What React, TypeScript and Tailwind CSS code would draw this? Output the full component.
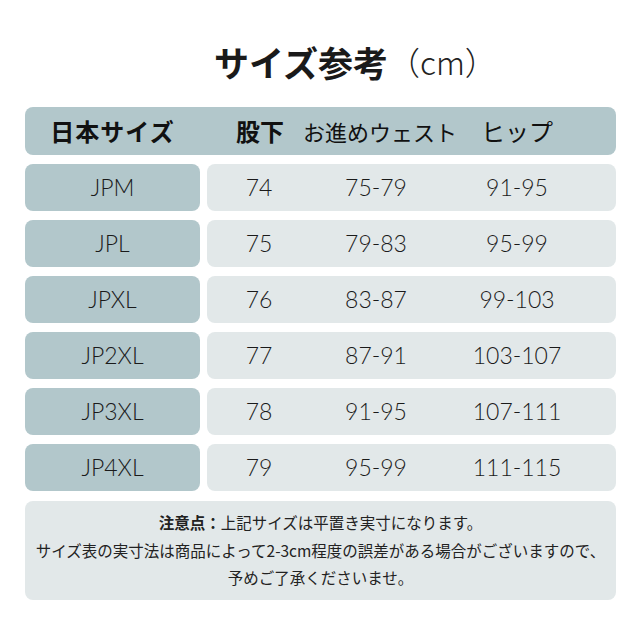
const rows = [
  { size: "JPM", inseam: "74", waist: "75-79", hip: "91-95" },
  { size: "JPL", inseam: "75", waist: "79-83", hip: "95-99" },
  { size: "JPXL", inseam: "76", waist: "83-87", hip: "99-103" },
  { size: "JP2XL", inseam: "77", waist: "87-91", hip: "103-107" },
  { size: "JP3XL", inseam: "78", waist: "91-95", hip: "107-111" },
  { size: "JP4XL", inseam: "79", waist: "95-99", hip: "111-115" },
];

const jp = { fontFamily: '"Noto Sans CJK JP", "Noto Sans", sans-serif' };
const num = { fontFamily: 'Lato, "Noto Sans CJK JP", sans-serif' };

export default function App() {
  return (
    <div className="w-[640px] h-[640px] bg-white text-[#1a1a1a]" style={jp}>
      {/* タイトル */}
      <div className="pt-[44px] pl-[214px] flex items-center leading-[35px] whitespace-nowrap">
        <span className="text-[35px] font-bold">サイズ参考</span>
        <span className="text-[32px] font-light text-[#222]">（cm）</span>
      </div>

      <div className="mt-[28px] ml-[25px] w-[591px] flex flex-col gap-[9px]">
        {/* ヘッダー */}
        <div className="h-[48px] rounded-[8px] bg-[#b2c7cb] grid grid-cols-[175px_7px_104px_130px_152px] items-center whitespace-nowrap font-bold text-[#111]">
          <div className="text-center text-[24px] tracking-[1px]">日本サイズ</div>
          <div />
          <div className="text-center text-[24px] pl-[2px]">股下</div>
          <div className="flex justify-center text-[22px] font-normal pl-[8px]">お進めウェスト</div>
          <div className="text-center text-[24px] font-normal">ヒップ</div>
        </div>

        {/* データ行 */}
        {rows.map((r) => (
          <div key={r.size} className="h-[47px] flex gap-[7px]" style={num}>
            <div className="w-[175px] rounded-[8px] bg-[#b2c7cb] flex items-center justify-center text-[23px] font-light">
              {r.size}
            </div>
            <div className="flex-1 rounded-[8px] bg-[#e2e8e9] grid grid-cols-[104px_130px_152px] items-center text-[23px] font-light">
              <div className="text-center">{r.inseam}</div>
              <div className="text-center">{r.waist}</div>
              <div className="text-center">{r.hip}</div>
            </div>
          </div>
        ))}

        {/* 注意点 */}
        <div className="mt-[1px] h-[99px] rounded-[8px] bg-[#e2e8e9] flex flex-col items-center justify-center text-[15.5px] leading-[27.5px] text-[#222]">
          <p>
            <span className="font-bold">注意点：</span>上記サイズは平置き実寸になります。
          </p>
          <p className="whitespace-nowrap">
            サイズ表の実寸法は商品によって2-3cm程度の誤差がある場合がございますので、
          </p>
          <p>予めご了承くださいませ。</p>
        </div>
      </div>
    </div>
  );
}
